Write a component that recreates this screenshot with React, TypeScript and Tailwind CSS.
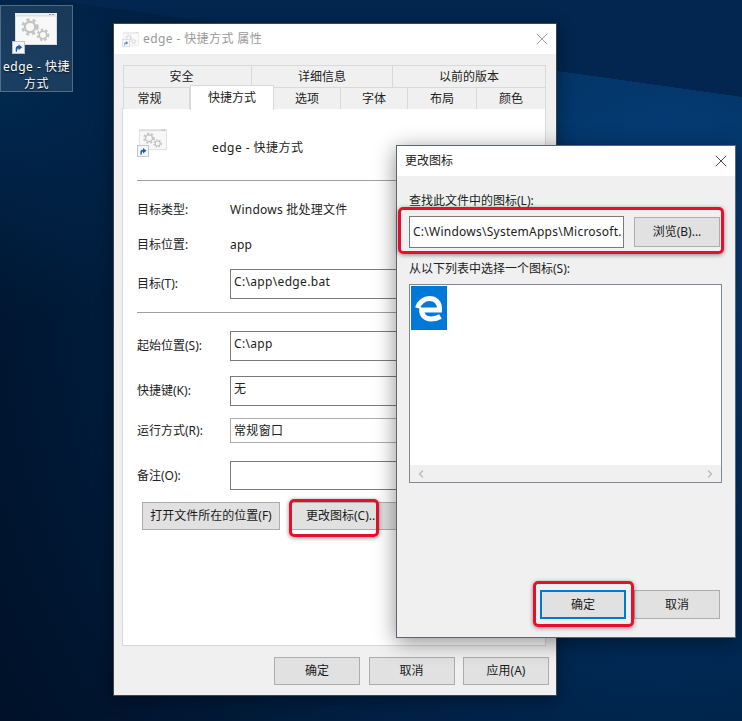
import React from 'react';
import { X, ChevronLeft, ChevronRight } from 'lucide-react';

const FONT = 'font-["Noto_Sans","Noto_Sans_CJK_SC",sans-serif]';

function Gear({ cx, cy, r, color }: { cx: number; cy: number; r: number; color: string }) {
  return (
    <g>
      <circle cx={cx} cy={cy} r={r} fill="none" stroke={color} strokeWidth={r * 0.36} strokeDasharray={`${r * 0.42} ${r * 0.42}`} />
      <circle cx={cx} cy={cy} r={r * 0.7} fill="none" stroke={color} strokeWidth={r * 0.3} />
    </g>
  );
}

function ShortcutArrow({ className }: { className: string }) {
  return (
    <svg viewBox="0 0 14 14" className={className}>
      <rect x="0.5" y="0.5" width="13" height="13" fill="#f4f6fa" stroke="#b9c0cc" />
      <path d="M4 11.5 V8 C4 6 5.5 5.5 7 5.5 V3.5 L11 6.8 L7 10 V8 C6 8 5.5 8.5 5.5 11.5 Z" fill="#1c5fb0" />
    </svg>
  );
}

function ShortcutIcon({ large }: { large?: boolean }) {
  return (
    <svg viewBox="0 0 42 32" className="absolute top-0 right-0 w-full h-full" preserveAspectRatio="none">
      <rect x="0" y="0" width="42" height="32" fill={large ? '#ececec' : '#e4e4e4'} />
      <rect x="0.5" y="3" width="41" height="28.5" fill="#f8f8f8" stroke="#c4c4c4" strokeWidth="0.5" />
      <rect x="34" y="1" width="2" height="1" fill="#999" />
      <rect x="37" y="1" width="2" height="1" fill="#999" />
      <Gear cx={15} cy={14} r={7.4} color="#c4c4c4" />
      <Gear cx={28} cy={22} r={5.4} color="#c0c0c0" />
    </svg>
  );
}

function Btn({ children, className = '' }: { children: React.ReactNode; className?: string }) {
  return (
    <div className={`flex items-center justify-center shrink-0 bg-[#e1e1e1] border border-[#adadad] text-[12px] text-[#1a1a1a] ${className}`}>
      {children}
    </div>
  );
}

function Row({ label, className = '', children }: { label: string; className?: string; children: React.ReactNode }) {
  return (
    <div className={`flex items-center ${className}`}>
      <div className="w-[93px] shrink-0 text-[12px] text-[#222]">{label}</div>
      {children}
    </div>
  );
}

function Field({ children, className = '' }: { children?: React.ReactNode; className?: string }) {
  return <div className={`w-[300px] shrink-0 border border-[#7a7a7a] bg-white pl-[3px] pt-[3px] text-[12px] leading-[18px] tracking-[0.33px] text-[#222] ${className}`}>{children}</div>;
}

function Tab({ label, className = '' }: { label: string; className?: string }) {
  return <div className={`flex items-center justify-center bg-[#f0f0f0] border-t border-r border-[#d9d9d9] text-[12px] text-[#222] ${className}`}>{label}</div>;
}

function RedBox({ className }: { className: string }) {
  return <div className={`absolute border-[3px] border-[#e60f2c] rounded-[5px] shadow-[0_1px_4px_rgba(0,0,0,0.45)] ${className}`} />;
}

export default function App() {
  return (
    <div className={`relative w-[742px] h-[721px] overflow-hidden ${FONT} bg-[linear-gradient(188deg,#02264f_96px,transparent_96px),radial-gradient(circle_at_0%_10%,#012a52_0,transparent_250px),radial-gradient(ellipse_800px_900px_at_90%_35%,#06427e_0%,#00264f_50%,#00152f_85%,#001128_100%)]`}>
      {/* desktop icon */}
      <div className="absolute left-0 top-[5px] w-[73px] h-[87px] bg-white/10 border border-white/25">
        <div className="relative ml-[14px] mt-[7px] w-[42px] h-[32px]">
          <ShortcutIcon large />
          <ShortcutArrow className="absolute left-[-3px] top-[28px] w-[13px] h-[13px]" />
        </div>
        <div className="mt-[13px] text-center text-[12px] leading-[17px] tracking-[0.5px] text-white [text-shadow:0_1px_2px_rgba(0,0,0,0.9)]">
          edge - 快捷
          <br />
          方式
        </div>
      </div>

      {/* properties window */}
      <div className="absolute left-[113px] top-[23px] w-[444px] h-[673px] flex flex-col bg-[#f0f0f0] border border-[#3c4650] shadow-[0_4px_16px_rgba(0,0,0,0.4)]">
        <div className="h-[30px] shrink-0 bg-white flex items-center pl-[9px] pr-[4px]">
          <div className="relative w-[16px] h-[14px] opacity-70">
            <ShortcutIcon />
            <ShortcutArrow className="absolute left-[-1px] top-[7px] w-[8px] h-[8px]" />
          </div>
          <div className="ml-[4px] pb-[1px] text-[12px] tracking-[0.4px] text-[#999]">edge - 快捷方式 属性</div>
          <X className="ml-auto w-[20px] h-[20px] text-[#8a8a8a]" strokeWidth={1} />
        </div>

        <div className="flex-1 flex flex-col pl-[8px] pr-[9px] pt-[11px]">
          <div className="flex h-[22px] ml-[1px] border-l border-[#d9d9d9]">
            <Tab label="安全" className="w-[128px] pr-[12px]" />
            <Tab label="详细信息" className="w-[141px]" />
            <Tab label="以前的版本" className="w-[153px]" />
          </div>
          <div className="relative z-10 flex h-[22px] ml-[1px] border-l border-[#d9d9d9] -mb-[1px]">
            <Tab label="常规" className="w-[66px] pr-[14px]" />
            <div className="w-[84px] h-[25px] -mt-[2px] flex items-center justify-center bg-white border-x border-t border-[#d9d9d9] text-[12px] text-[#222]">快捷方式</div>
            <Tab label="选项" className="w-[67px]" />
            <Tab label="字体" className="w-[67px]" />
            <Tab label="布局" className="w-[69px]" />
            <Tab label="颜色" className="w-[69px]" />
          </div>

          <div className="w-[424px] h-[538px] shrink-0 bg-white border border-[#d9d9d9] pl-[14px] pt-[20px]">
            <div className="flex items-start h-[30px]">
              <div className="relative ml-[2px] w-[28px] h-[21px]">
                <ShortcutIcon />
                <ShortcutArrow className="absolute left-[-2px] top-[16px] w-[12px] h-[12px]" />
              </div>
              <div className="ml-[45px] mt-[10px] text-[12px] tracking-[0.45px] text-[#222]">edge - 快捷方式</div>
            </div>
            <div className="mt-[21px] w-[394px] h-px bg-[#a0a0a0]" />
            <Row label="目标类型:" className="mt-[19px] h-[20px]">
              <div className="text-[12px] tracking-[0.25px] text-[#222]">Windows 批处理文件</div>
            </Row>
            <Row label="目标位置:" className="mt-[15px] h-[20px]">
              <div className="text-[12px] tracking-[0.25px] text-[#222]">app</div>
            </Row>
            <Row label="目标(T):" className="mt-[14px] h-[30px]">
              <Field className="h-[30px]">C:\app\edge.bat</Field>
            </Row>
            <div className="mt-[13px] w-[394px] h-px bg-[#a0a0a0]" />
            <Row label="起始位置(S):" className="mt-[18px] h-[30px]">
              <Field className="h-[30px]">C:\app</Field>
            </Row>
            <Row label="快捷键(K):" className="mt-[15px] h-[30px]">
              <Field className="h-[30px]">无</Field>
            </Row>
            <Row label="运行方式(R):" className="mt-[12px] h-[25px]">
              <Field className="h-[25px] bg-[#e1e1e1] border-[#adadad]">常规窗口</Field>
            </Row>
            <Row label="备注(O):" className="mt-[18px] h-[29px]">
              <Field className="h-[29px]" />
            </Row>
            <div className="mt-[12px] ml-[5px] flex gap-[11px]">
              <Btn className="w-[138px] h-[28px]">打开文件所在的位置(F)</Btn>
              <Btn className="w-[138px] h-[28px] !justify-start pl-[14px]">更改图标(C)...</Btn>
            </div>
          </div>

          <div className="mt-[11px] ml-[152px] flex gap-[8.5px]">
            <Btn className="w-[86px] h-[28px]">确定</Btn>
            <Btn className="w-[86px] h-[28px]">取消</Btn>
            <Btn className="w-[86px] h-[28px]">应用(A)</Btn>
          </div>
        </div>
      </div>
      <RedBox className="left-[289px] top-[499px] w-[90px] h-[38px]" />

      {/* change icon dialog */}
      <div className="absolute left-[396px] top-[145px] w-[340px] h-[493px] flex flex-col bg-[#f0f0f0] border border-[#5c6670] shadow-[0_4px_20px_rgba(0,0,0,0.45)]">
        <div className="h-[30px] shrink-0 bg-white flex items-center pl-[8px] pr-[4px]">
          <div className="text-[12px] text-[#222]">更改图标</div>
          <X className="ml-auto w-[20px] h-[20px] text-[#222]" strokeWidth={1} />
        </div>
        <div className="flex-1 flex flex-col pl-[12px] pb-[18px]">
          <div className="mt-[14px] h-[20px] pt-[1px] flex items-center text-[12px] text-[#222]">查找此文件中的图标(L):</div>
          <div className="mt-[6px] flex items-center gap-[10px]">
            <div className="w-[215px] h-[32px] flex items-center pl-[3px] border border-[#7a7a7a] bg-white text-[12px] tracking-[0.25px] text-[#222] overflow-hidden whitespace-nowrap">C:\Windows\SystemApps\Microsoft.</div>
            <Btn className="w-[86px] h-[30px]">浏览(B)...</Btn>
          </div>
          <div className="mt-[10px] h-[20px] pt-[1px] flex items-center text-[12px] text-[#222]">从以下列表中选择一个图标(S):</div>
          <div className="mt-[6px] w-[313px] h-[199px] flex flex-col border border-[#828790] bg-white">
            <div className="flex-1 p-px">
              <svg viewBox="0 0 36 44" className="w-[36px] h-[44px]">
                <rect width="36" height="44" fill="#0078d7" />
                <path d="M9 24 H28.5 C29 16 24 12.5 18.5 12.5 C13 12.5 8 16.5 6.5 22" fill="none" stroke="#fff" strokeWidth="5" />
                <path d="M11 22 C9.5 29 14 33 20 33 C23.5 33 26.5 32.3 29.5 30.5" fill="none" stroke="#fff" strokeWidth="5" />
              </svg>
            </div>
            <div className="h-[17px] shrink-0 bg-[#f0f0f0] flex items-center justify-between px-[5px] text-[#bbb]">
              <ChevronLeft className="w-[12px] h-[12px]" strokeWidth={3} />
              <ChevronRight className="w-[12px] h-[12px]" strokeWidth={3} />
            </div>
          </div>
          <div className="mt-auto flex justify-end gap-[8px] pr-[15px]">
            <Btn className="w-[86px] h-[29px] !border-2 !border-[#0078d7]">确定</Btn>
            <Btn className="w-[86px] h-[29px]">取消</Btn>
          </div>
        </div>
      </div>
      <RedBox className="left-[398px] top-[207px] w-[326px] h-[47px]" />
      <RedBox className="left-[533px] top-[581px] w-[101px] h-[46px]" />
    </div>
  );
}
